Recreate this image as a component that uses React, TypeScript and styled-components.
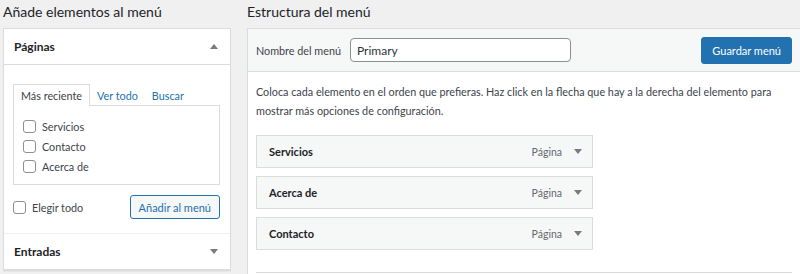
import * as React from 'react';
import styled, { createGlobalStyle } from 'styled-components';

const GlobalStyle = createGlobalStyle`
  html, body {
    margin: 0;
    padding: 0;
    background: #f0f0f1;
    overflow: hidden;
  }
  body {
    font-family: Lato, 'Open Sans', sans-serif;
    font-size: 10.8px;
    color: #3c434a;
  }
`;

const Page = styled.div`
  display: flex;
  gap: 16px;
  padding-left: 3px;
  width: 800px;
  height: 274px;
  box-sizing: border-box;
  overflow: hidden;
`;

const LeftColumn = styled.div`
  width: 228px;
  flex-shrink: 0;
`;

const RightColumn = styled.div`
  flex: 1;
  min-width: 0;
`;

const Heading = styled.h2`
  margin: 0;
  height: 28px;
  padding-top: 1px;
  box-sizing: border-box;
  font-size: 14px;
  font-weight: 400;
  color: #1d2327;
  line-height: 22px;
`;

const SideBox = styled.div`
  background: #fff;
  border: 1px solid #dcdcde;
  box-shadow: 0 1px 1px rgba(0, 0, 0, 0.04);
`;

const SectionHeader = styled.div<{ $divider?: boolean }>`
  height: 35px;
  display: flex;
  align-items: center;
  justify-content: space-between;
  padding: 0 12px 0 10px;
  font-size: 12px;
  font-weight: 700;
  color: #1d2327;
  border-bottom: 1px solid #dcdcde;
  ${p => (p.$divider ? 'border-top: 1px solid #f0f0f1;' : '')}
`;

const Arrow = styled.span<{ $up?: boolean }>`
  width: 0;
  height: 0;
  border-left: 4px solid transparent;
  border-right: 4px solid transparent;
  ${p =>
    p.$up
      ? 'border-bottom: 5px solid #787c82;'
      : 'border-top: 5px solid #787c82;'}
`;

const SectionBody = styled.div`
  padding: 19px 10px 14px 9px;
`;

const Tabs = styled.div`
  display: flex;
  height: 21px;
`;

const Tab = styled.div<{ $active?: boolean }>`
  display: flex;
  align-items: center;
  margin-bottom: -1px;
  position: relative;
  ${p =>
    p.$active
      ? `
    padding: 0 7px;
    border: 1px solid #dcdcde;
    border-bottom: none;
    background: #fff;
    color: #3c434a;
    z-index: 1;
  `
      : `
    color: #2271b1;
    padding: 0 7px 0 7px;
  `}
`;

const TabPanel = styled.div`
  border: 1px solid #dcdcde;
  height: 80px;
  box-sizing: border-box;
  padding: 14px 9px 0;
  display: flex;
  flex-direction: column;
  gap: 7px;
`;

const CheckRow = styled.label`
  display: flex;
  align-items: center;
  gap: 6px;
  height: 13px;
`;

const Box = styled.span`
  width: 13px;
  height: 13px;
  box-sizing: border-box;
  border: 1px solid #8c8f94;
  border-radius: 3px;
  background: #fff;
  flex-shrink: 0;
`;

const FooterRow = styled.div`
  display: flex;
  align-items: center;
  justify-content: space-between;
  margin-top: 10px;
`;

const SecondaryButton = styled.button`
  font-family: inherit;
  font-size: 11px;
  height: 24px;
  padding: 0 8px;
  color: #2271b1;
  background: #f6f7f7;
  border: 1px solid #2271b1;
  border-radius: 3px;
`;

const MenuBox = styled.div`
  border: 1px solid #dcdcde;
  border-right: none;
  border-bottom: none;
  background: #fff;
  height: 246px;
  box-sizing: border-box;
  overflow: hidden;
`;

const MenuHeader = styled.div`
  height: 43px;
  box-sizing: border-box;
  background: #f6f7f7;
  border-bottom: 1px solid #dcdcde;
  display: flex;
  align-items: center;
  padding: 0 8px;
`;

const Label = styled.span`
  margin-right: 9px;
`;

const NameInput = styled.div`
  width: 221px;
  height: 24px;
  box-sizing: border-box;
  border: 1px solid #8c8f94;
  border-radius: 4px;
  background: #fff;
  display: flex;
  align-items: center;
  padding: 0 6px;
  font-size: 12px;
  color: #2c3338;
`;

const PrimaryButton = styled.button`
  margin-left: auto;
  font-family: inherit;
  font-size: 11px;
  height: 27px;
  padding: 0 10px;
  color: #fff;
  background: #2271b1;
  border: 1px solid #2271b1;
  border-radius: 3px;
`;

const MenuBody = styled.div`
  padding: 10px 8px 0;
`;

const Description = styled.p`
  margin: 0 0 15px;
  line-height: 19px;
`;

const ItemList = styled.div`
  display: flex;
  flex-direction: column;
  gap: 8px;
  width: 337px;
`;

const Item = styled.div`
  height: 33px;
  box-sizing: border-box;
  border: 1px solid #dcdcde;
  background: #f6f7f7;
  display: flex;
  align-items: center;
  padding: 0 10px 0 12px;
`;

const ItemTitle = styled.span`
  font-weight: 700;
  font-size: 11px;
  color: #1d2327;
  flex: 1;
`;

const ItemType = styled.span`
  color: #646970;
  font-size: 10.5px;
  margin-right: 12px;
`;

const MenuFooter = styled.div`
  margin-top: 22px;
  border-top: 1px solid #dcdcde;
`;

const pages = ['Servicios', 'Contacto', 'Acerca de'];
const items = ['Servicios', 'Acerca de', 'Contacto'];

export default function App() {
  return (
    <>
      <GlobalStyle />
      <Page>
        <LeftColumn>
          <Heading>Añade elementos al menú</Heading>
          <SideBox>
            <SectionHeader>
              Páginas
              <Arrow $up />
            </SectionHeader>
            <SectionBody>
              <Tabs>
                <Tab $active>Más reciente</Tab>
                <Tab>Ver todo</Tab>
                <Tab>Buscar</Tab>
              </Tabs>
              <TabPanel>
                {pages.map(p => (
                  <CheckRow key={p}>
                    <Box />
                    {p}
                  </CheckRow>
                ))}
              </TabPanel>
              <FooterRow>
                <CheckRow>
                  <Box />
                  Elegir todo
                </CheckRow>
                <SecondaryButton>Añadir al menú</SecondaryButton>
              </FooterRow>
            </SectionBody>
            <SectionHeader $divider>
              Entradas
              <Arrow />
            </SectionHeader>
          </SideBox>
        </LeftColumn>
        <RightColumn>
          <Heading>Estructura del menú</Heading>
          <MenuBox>
            <MenuHeader>
              <Label>Nombre del menú</Label>
              <NameInput>Primary</NameInput>
              <PrimaryButton>Guardar menú</PrimaryButton>
            </MenuHeader>
            <MenuBody>
              <Description>
                Coloca cada elemento en el orden que prefieras. Haz click en la flecha que hay a la derecha del elemento para mostrar más opciones de configuración.
              </Description>
              <ItemList>
                {items.map(i => (
                  <Item key={i}>
                    <ItemTitle>{i}</ItemTitle>
                    <ItemType>Página</ItemType>
                    <Arrow />
                  </Item>
                ))}
              </ItemList>
              <MenuFooter />
            </MenuBody>
          </MenuBox>
        </RightColumn>
      </Page>
    </>
  );
}
